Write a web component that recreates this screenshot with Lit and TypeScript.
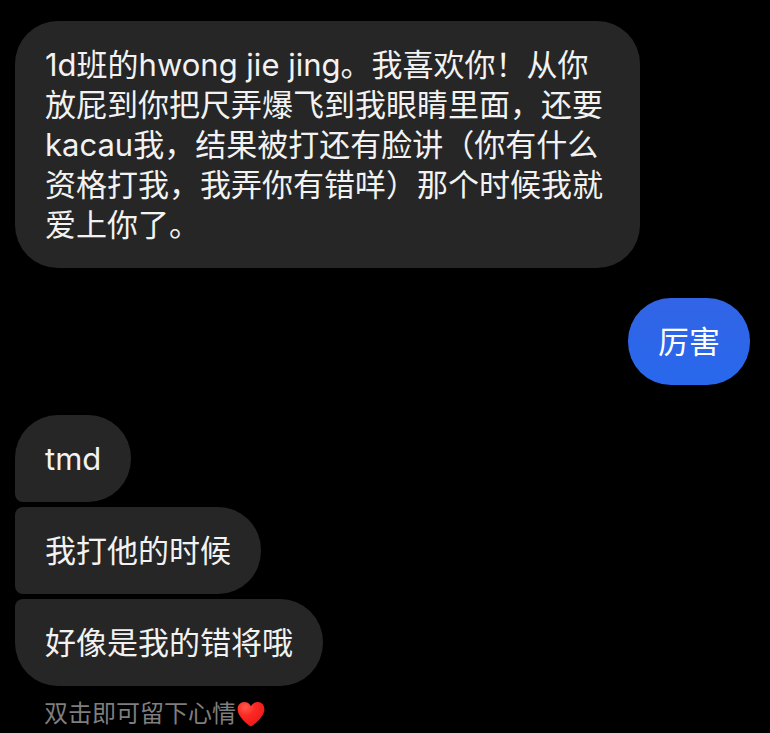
import { LitElement, html, css } from "lit";
import { customElement, property } from "lit/decorators.js";
import { classMap } from "lit/directives/class-map.js";

type Side = "in" | "out";

interface Group {
  side: Side;
  texts: string[];
}

const groups: Group[] = [
  {
    side: "in",
    texts: [
      "1d班的hwong jie jing。我喜欢你！从你放屁到你把尺弄爆飞到我眼睛里面，还要kacau我，结果被打还有脸讲（你有什么资格打我，我弄你有错咩）那个时候我就爱上你了。",
    ],
  },
  { side: "out", texts: ["厉害"] },
  { side: "in", texts: ["tmd", "我打他的时候", "好像是我的错将哦"] },
];

@customElement("message-group")
class MessageGroup extends LitElement {
  @property({ attribute: false }) group!: Group;

  static styles = css`
    :host {
      display: block;
    }
    .group {
      display: flex;
      flex-direction: column;
      align-items: flex-start;
      gap: 5px;
    }
    .group.out {
      align-items: flex-end;
    }
    .bubble {
      box-sizing: border-box;
      max-width: 85%;
      margin: 0;
      padding: 24px 30px 23px;
      border-radius: 43px;
      background: #262626;
      color: #f2f2f2;
      font-size: 31px;
      line-height: 40px;
      text-spacing-trim: space-all;
    }
    .out .bubble {
      background: linear-gradient(#3264e6, #2868ec);
      color: #ffffff;
    }
    .in .joins-next {
      border-bottom-left-radius: 8px;
    }
    .in .joins-previous {
      border-top-left-radius: 8px;
    }
  `;

  render() {
    const { side, texts } = this.group;
    return html`<div class="group ${side}">
      ${texts.map(
        (text, i) => html`<p
          class=${classMap({
            bubble: true,
            "joins-previous": i > 0,
            "joins-next": i < texts.length - 1,
          })}
        >${text}</p>`
      )}
    </div>`;
  }
}

@customElement("app-root")
class AppRoot extends LitElement {
  static styles = css`
    :host {
      display: block;
      box-sizing: border-box;
      min-height: 100vh;
      padding: 21px 20px 0 15px;
      background: #000000;
      font-family: Inter, "Noto Sans CJK SC", sans-serif;
    }
    .thread {
      display: flex;
      flex-direction: column;
      gap: 30px;
    }
    .hint {
      display: flex;
      align-items: center;
      gap: 1px;
      margin: 12px 0 0;
      padding-left: 29px;
      color: #7e7e7e;
      font-size: 24px;
      line-height: 32px;
    }
    .heart {
      width: 28px;
      height: 26px;
    }
  `;

  render() {
    return html`
      <main lang="zh-CN">
        <div class="thread">
          ${groups.map((group) => html`<message-group .group=${group}></message-group>`)}
        </div>
        <p class="hint">
          <span>双击即可留下心情</span>
          <svg class="heart" viewBox="0 0 28 26" role="img" aria-label="红心">
            <defs>
              <radialGradient id="shine" cx="0.3" cy="0.22" r="0.75">
                <stop offset="0" stop-color="#ff5a4c" />
                <stop offset="0.45" stop-color="#fb2a24" />
                <stop offset="1" stop-color="#f21a1c" />
              </radialGradient>
            </defs>
            <path
              fill="url(#shine)"
              d="M14 25.2C12.6 25.2 8.4 21.6 5.2 17.9C2.5 14.8 .6 11.6 .6 8.2C.6 3.9 3.5 1 7.3 1C10.2 1 12.7 2.5 14 5.2C15.3 2.5 17.8 1 20.7 1C24.5 1 27.4 3.9 27.4 8.2C27.4 11.6 25.5 14.8 22.8 17.9C19.6 21.6 15.4 25.2 14 25.2Z"
            />
          </svg>
        </p>
      </main>
    `;
  }
}
